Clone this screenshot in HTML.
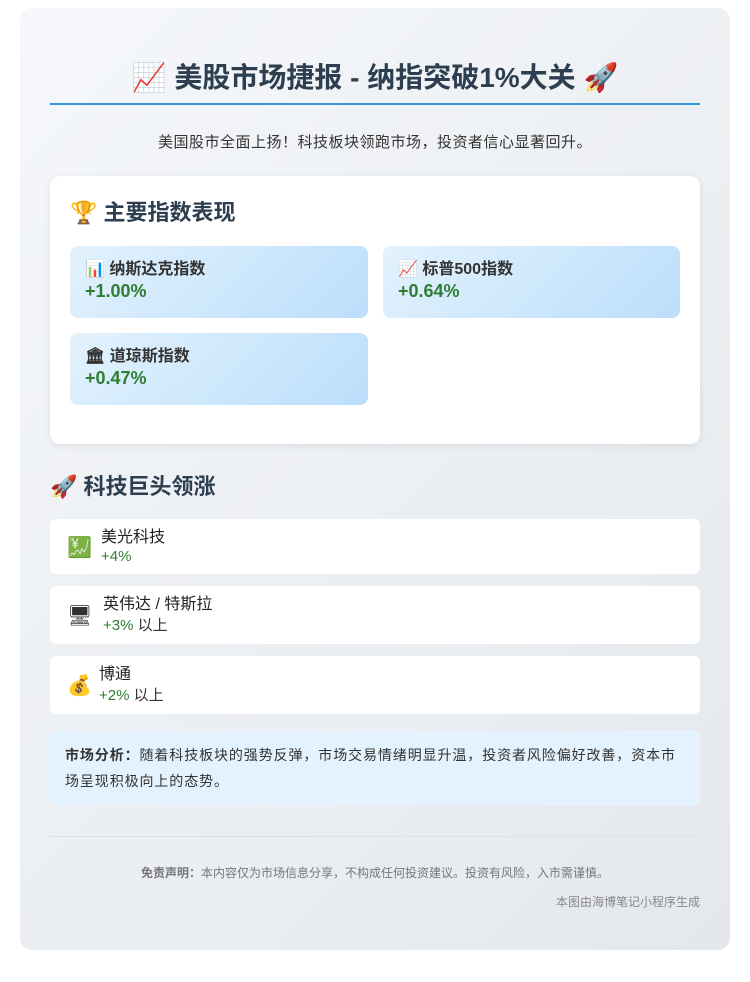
<!DOCTYPE html>
<html><head><meta charset="utf-8"><style>
*{margin:0;padding:0;box-sizing:border-box}
body{width:750px;height:982px;background:#fff;font-family:"Liberation Sans","Noto Sans CJK SC",sans-serif;color:#333}
.wrap{position:absolute;left:20px;top:8px;width:710px;height:942px;border-radius:12px;background:linear-gradient(135deg,#f5f7fa,#e4e8ec)}
.abs{position:absolute}
h1{position:absolute;left:0;width:710px;top:50px;text-align:center;font-size:28px;font-weight:bold;color:#2c3e50;line-height:40px;white-space:nowrap}
.line{left:30px;top:95px;width:650px;height:2px;background:#3498db}
.sub{left:0;width:710px;top:124px;text-align:center;font-size:15px;letter-spacing:0.5px;line-height:22px;color:#333}
.card{left:30px;top:168px;width:650px;height:268px;background:#fff;border-radius:10px;box-shadow:0 2px 8px rgba(0,0,0,.08)}
.h2{font-size:22px;font-weight:bold;color:#2c3e50;line-height:30px}
.tile{position:absolute;width:298px;height:72px;border-radius:8px;background:linear-gradient(135deg,#e3f2fd,#bbdefb);padding:14px 15px}
.tile .n{font-size:16px;font-weight:bold;line-height:20px;color:#333}
.tile .v{font-size:18px;font-weight:bold;color:#2e7d32;line-height:22px}
.item{position:absolute;left:30px;width:650px;background:#fff;border-radius:6px}
.item .ic{position:absolute;left:17px;font-size:20px}
.item .n{position:absolute;font-size:16px;line-height:20px;color:#222}
.item .v{position:absolute;font-size:15px;line-height:18px;color:#2e7d32}
.item .v span{color:#333}
.ana{left:30px;top:722px;width:650px;height:76px;background:#e3f2fd;border-radius:8px;padding:12px 15px;font-size:14px;letter-spacing:0.9px;line-height:26px;color:#333}
.div{left:30px;top:828px;width:650px;height:1px;background:#dde0e4}
.dis{left:0;width:710px;top:857px;text-align:center;font-size:12px;color:#777;line-height:16px}
.cr{right:30px;top:886px;font-size:12px;color:#888;line-height:16px}
</style></head><body>
<div class="wrap">
<h1>📈 美股市场捷报 - 纳指突破1%大关 🚀</h1>
<div class="abs line"></div>
<div class="abs sub">美国股市全面上扬！科技板块领跑市场，投资者信心显著回升。</div>
<div class="abs card">
 <div class="abs h2" style="left:20px;top:22px">🏆 主要指数表现</div>
 <div class="tile" style="left:20px;top:70px"><div class="n">📊 纳斯达克指数</div><div class="v">+1.00%</div></div>
 <div class="tile" style="left:333px;top:70px;width:297px"><div class="n">📈 标普500指数</div><div class="v">+0.64%</div></div>
 <div class="tile" style="left:20px;top:157px"><div class="n">🏛 道琼斯指数</div><div class="v">+0.47%</div></div>
</div>
<div class="abs h2" style="left:30px;top:464px">🚀 科技巨头领涨</div>
<div class="item" style="top:511px;height:55px"><div class="ic" style="top:16px">💹</div><div class="n" style="left:51px;top:9px">美光科技</div><div class="v" style="left:51px;top:29px">+4%</div></div>
<div class="item" style="top:578px;height:58px"><div class="ic" style="top:17px">🖥</div><div class="n" style="left:53px;top:9px">英伟达 / 特斯拉</div><div class="v" style="left:53px;top:31px">+3% <span>以上</span></div></div>
<div class="item" style="top:648px;height:58px"><div class="ic" style="top:17px">💰</div><div class="n" style="left:49px;top:9px">博通</div><div class="v" style="left:49px;top:31px">+2% <span>以上</span></div></div>
<div class="abs ana"><b>市场分析：</b>随着科技板块的强势反弹，市场交易情绪明显升温，投资者风险偏好改善，资本市场呈现积极向上的态势。</div>
<div class="abs div"></div>
<div class="abs dis"><b>免责声明：</b>本内容仅为市场信息分享，不构成任何投资建议。投资有风险，入市需谨慎。</div>
<div class="abs cr">本图由海博笔记小程序生成</div>
</div>
</body></html>
